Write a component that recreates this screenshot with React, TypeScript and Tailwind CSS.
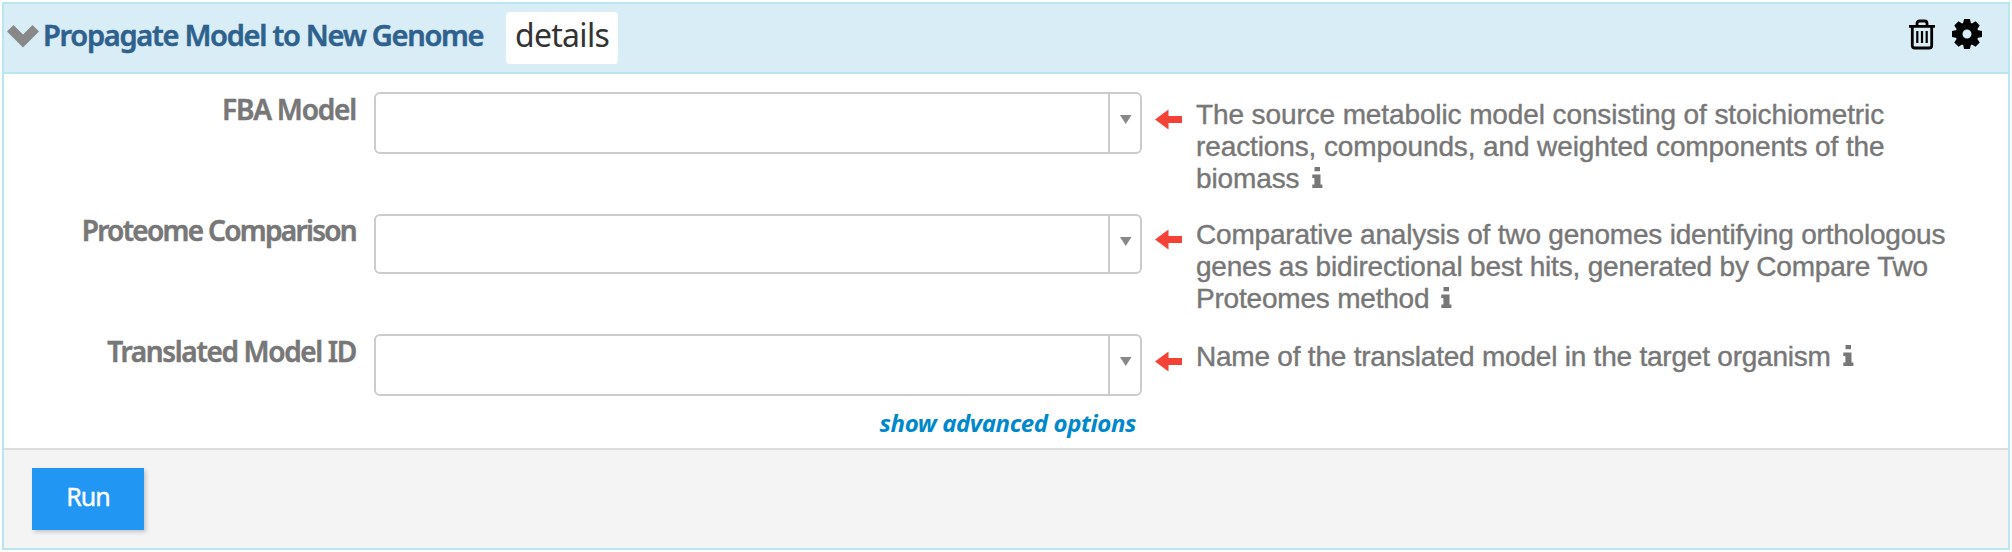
import React from "react";

const rows = [
  {
    label: "FBA Model",
    hint: ["The source metabolic model consisting of stoichiometric", "reactions, compounds, and weighted components of the", "biomass"],
    row: "h-[122px]",
    field: "h-[62px]",
    labelPos: "tracking-[-1.2px]",
    caret: "mt-[21px]",
    arrow: "mt-[17px]",
    hintPos: "mt-[7px] tracking-[-0.11px]",
  },
  {
    label: "Proteome Comparison",
    hint: ["Comparative analysis of two genomes identifying orthologous", "genes as bidirectional best hits, generated by Compare Two", "Proteomes method"],
    row: "h-[120px]",
    field: "h-[60px]",
    labelPos: "-mt-px tracking-[-1.7px]",
    caret: "mt-[21px]",
    arrow: "mt-[15px]",
    hintPos: "mt-[5px] tracking-[-0.2px]",
  },
  {
    label: "Translated Model ID",
    hint: ["Name of the translated model in the target organism"],
    row: "h-[62px]",
    field: "h-[62px]",
    labelPos: "tracking-[-1.35px]",
    caret: "mt-[21px]",
    arrow: "mt-[17px]",
    hintPos: "mt-[7px] tracking-[-0.22px]",
  },
];

function InfoIcon() {
  return (
    <svg className="ml-[12px] inline-block align-baseline" width="11" height="21" viewBox="0 0 11 21" fill="#777">
      <path d="M2.500 0h5.5v4.3H2.500zM0.3 7.500h8.2v10H10.400V21H0.300V17.500H2.400V11H0.300z" />
    </svg>
  );
}

function Trash() {
  return (
    <svg width="26" height="31" viewBox="0 0 26 31" fill="none" stroke="#000" strokeWidth="2.8">
      <path d="M0 7.300H26M8 7V4.500Q8 2 10.500 2H15.500Q18 2 18 4.500V7M3.300 7V26.500Q3.300 29 6 29H20Q22.700 29 22.700 26.500V7" />
      <path d="M8.300 12V24M13 12V24M17.700 12V24" strokeWidth="2.2" />
    </svg>
  );
}

function Gear() {
  const teeth = [0, 45, 90, 135, 180, 225, 270, 315];
  return (
    <svg width="30" height="30" viewBox="-15 -15 30 30">
      <circle r="8" fill="none" stroke="#000" strokeWidth="7" />
      {teeth.map((a) => (
        <path key={a} d="M-4 -10L-3 -15H3L4 -10z" transform={`rotate(${a})`} />
      ))}
    </svg>
  );
}

export default function App() {
  return (
    <div className="h-[552px] w-[2012px] bg-white p-[2px] font-['Noto_Sans',sans-serif]">
      <div className="flex h-[548px] w-[2008px] flex-col border-2 border-[#b9e7ef]">
        <header className="flex h-[70px] shrink-0 items-start border-b-2 border-[#b9e7ef] bg-[#d9edf7]">
          <svg className="ml-[3px] mt-[21px] shrink-0" width="32" height="23" viewBox="0 0 32 23" fill="#888">
            <path d="M0 6.500L6.500 0L16 9.500L25.500 0L32 6.500L16 22.500z" />
          </svg>
          <h1 className="ml-[4px] mt-[12px] w-[463px] whitespace-nowrap text-[29px] leading-[38px] font-semibold tracking-[-1.28px] text-[#2e618d] [-webkit-text-stroke:0.5px_#2e618d]">
            Propagate Model to New Genome
          </h1>
          <button className="mt-[8px] h-[52px] w-[112px] whitespace-nowrap rounded-[4px] bg-white pb-[6px] text-[32px] leading-[46px] tracking-[-0.7px] text-[#333]">
            details
          </button>
          <div className="ml-auto mr-[26px] flex gap-[17px] pt-[15px]">
            <Trash />
            <Gear />
          </div>
        </header>

        <main className="flex h-[374px] shrink-0 flex-col pt-[18px]">
          {rows.map((r) => (
            <div key={r.label} className={`flex items-start ${r.row}`}>
              <label className={`w-[352px] whitespace-nowrap text-right text-[28px] leading-[34px] font-semibold text-[#777] [-webkit-text-stroke:0.5px_#777] ${r.labelPos}`}>
                {r.label}
              </label>
              <div className={`ml-[18px] flex w-[768px] shrink-0 rounded-[6px] border-2 border-[#ccc] bg-white ${r.field}`}>
                <div className="flex-1" />
                <div className="w-[32px] border-l-2 border-[#ccc] pl-[10px]">
                  <svg className={r.caret} width="12" height="9" viewBox="0 0 12 9" fill="#888">
                    <path d="M0 0H11.500L5.750 9z" />
                  </svg>
                </div>
              </div>
              <svg className={`ml-[13px] shrink-0 ${r.arrow}`} width="27" height="21" viewBox="0 0 27 21" fill="#f44336">
                <path d="M0 10.500L13.500 0.500V7H27V14H13.500V20.500z" />
              </svg>
              <p className={`ml-[14px] whitespace-nowrap font-['Liberation_Sans',sans-serif] text-[28px] leading-[32px] text-[#777] [-webkit-text-stroke:0.4px_#777] ${r.hintPos}`}>
                {r.hint.map((line, i) => (
                  <span key={line} className="block">
                    {line}
                    {i === r.hint.length - 1 && <InfoIcon />}
                  </span>
                ))}
              </p>
            </div>
          ))}
          <div className="mt-[10px] w-[1132px] text-right text-[24px] leading-[34px] font-bold italic tracking-[-0.4px] text-[#0088cc]">
            show advanced options
          </div>
        </main>

        <footer className="flex-1 border-t-2 border-[#ddd] bg-[#f4f4f4] pl-[28px] pt-[18px]">
          <button className="block h-[62px] w-[112px] bg-[#2196f3] pb-[4px] text-[25px] tracking-[-1px] text-white shadow-[2px_2px_4px_rgba(0,0,0,0.2)] [-webkit-text-stroke:0.4px_#fff]">
            Run
          </button>
        </footer>
      </div>
    </div>
  );
}
